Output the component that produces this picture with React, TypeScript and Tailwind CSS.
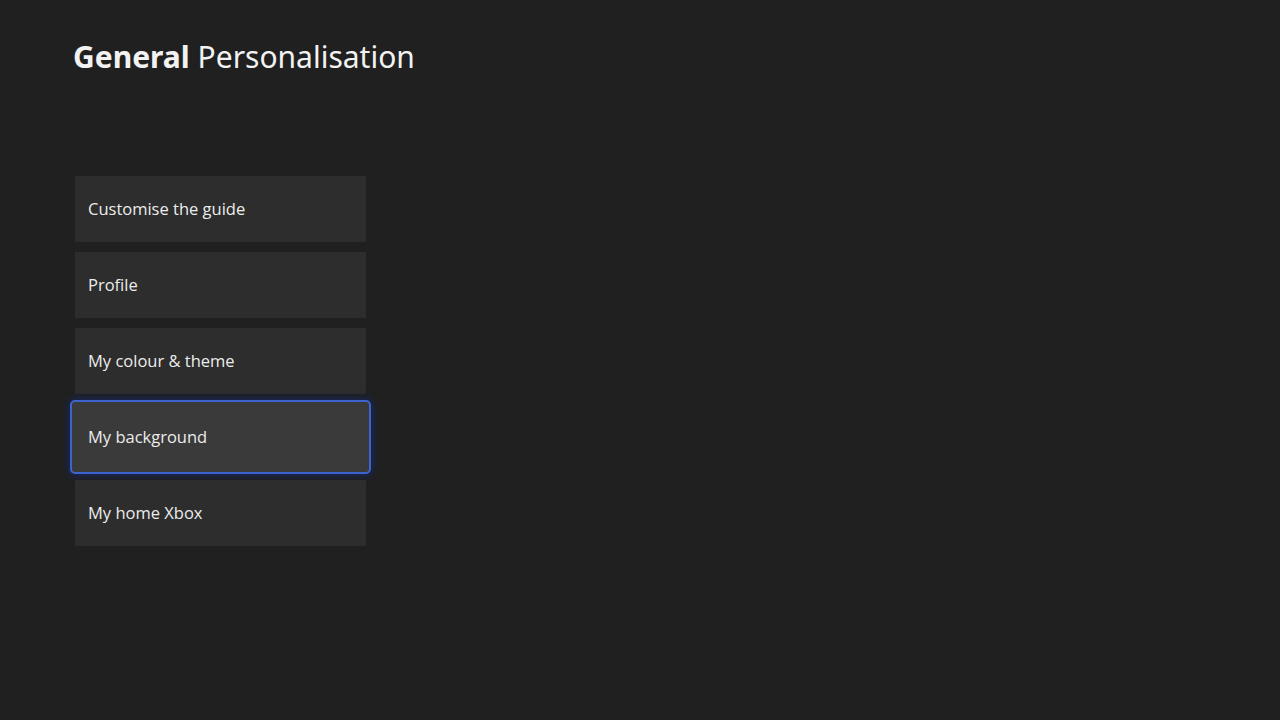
const items = [
  { label: 'Customise the guide' },
  { label: 'Profile' },
  { label: 'My colour & theme' },
  { label: 'My background', focused: true },
  { label: 'My home Xbox' },
];

export default function App() {
  return (
    <div className="min-h-screen w-full bg-[#202020] text-white" style={{ fontFamily: '"Open Sans", "Noto Sans", sans-serif' }}>
      <div className="px-[73px] pt-[36px]">
        <h1 className="text-[30px] leading-[42px] text-[#f2f2f2]" style={{ fontFamily: '"Noto Sans", "Open Sans", sans-serif' }}>
          <span className="font-bold">General</span> <span className="font-normal">Personalisation</span>
        </h1>
      </div>

      <div className="mt-[98px] flex flex-col gap-[10px] pl-[75px]">
        {items.map((item, i) =>
          item.focused ? (
            <div key={i} className="-mx-[5px] -my-[4px] w-[301px] rounded-[5px] border-[2px] border-[#3d63cf] bg-[#3a3a3a] p-[2px] shadow-[0_0_6px_2px_rgba(20,40,110,0.7)]">
              <div className="flex h-[66px] items-center pl-[14px] text-[16.5px] text-[#ececec]">{item.label}</div>
            </div>
          ) : (
            <div key={i} className="flex h-[66px] w-[291px] items-center bg-[#2d2d2d] pl-[13px] text-[16.5px] text-[#ececec]">
              {item.label}
            </div>
          )
        )}
      </div>
    </div>
  );
}
